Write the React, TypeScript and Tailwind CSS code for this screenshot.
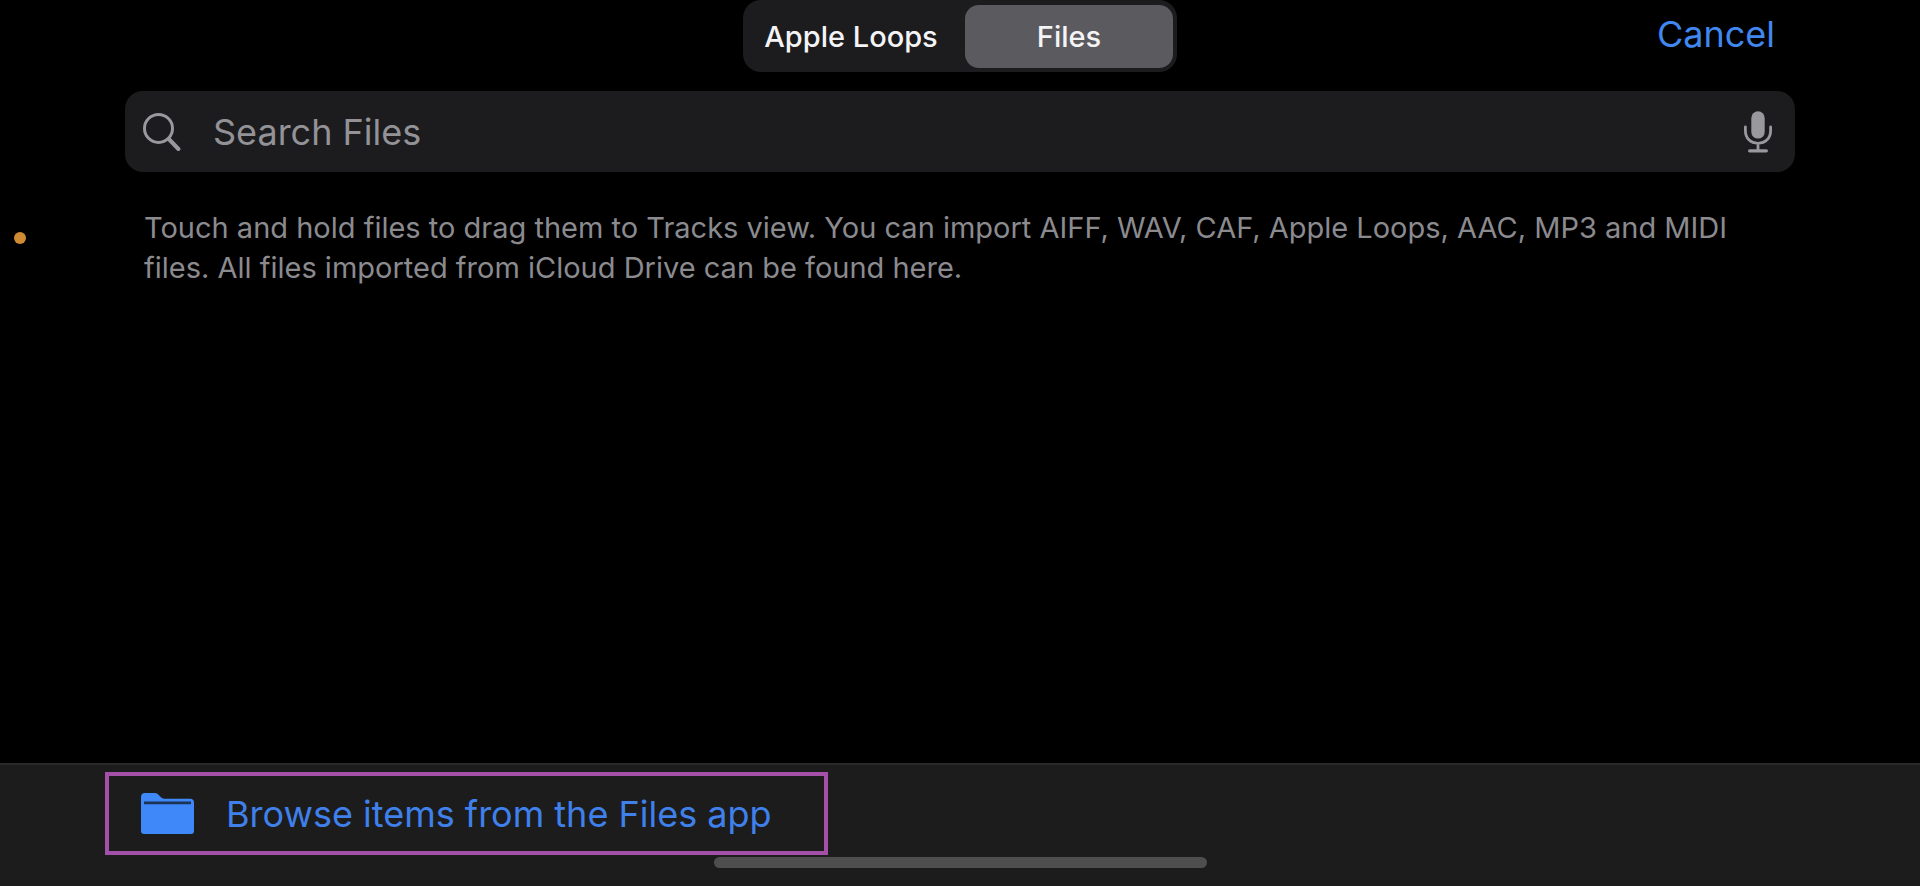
import React, { useState } from "react";

const tabs = ["Apple Loops", "Files"] as const;
type Tab = (typeof tabs)[number];

function SearchIcon() {
  return (
    <svg width="38" height="39" viewBox="0 0 38 39" fill="none" stroke="#98989d" strokeLinecap="round" aria-hidden="true">
      <circle cx="15.5" cy="16.4" r="14" strokeWidth="3" />
      <path d="M25.8 27L35.4 37" strokeWidth="4" />
    </svg>
  );
}

function MicIcon() {
  return (
    <svg width="28" height="43" viewBox="0 0 28 43" fill="none" aria-hidden="true">
      <rect x="7.3" y="1.2" width="13.4" height="27.4" rx="6.7" fill="#98989d" />
      <path
        d="M1.4 17V20.8C1.4 28.3 6.6 33.3 14 33.3S26.6 28.3 26.6 20.8V17M14 33.3V40"
        stroke="#98989d"
        strokeWidth="2.8"
        strokeLinecap="round"
      />
      <path d="M5.6 40.8H22.4" stroke="#98989d" strokeWidth="3.2" strokeLinecap="round" />
    </svg>
  );
}

function FolderIcon() {
  return (
    <svg width="53" height="41" viewBox="0 0 53 41" aria-hidden="true">
      <path
        d="M0 4Q0 0 4 0H13.5Q15.8 0 17.2 1.4L20.2 4.4Q21.7 5.8 24 5.8H49Q53 5.8 53 9.8V38Q53 41 50 41H3Q0 41 0 38Z"
        fill="#3f88f9"
      />
      <path d="M3 9.9H50" stroke="#1d3354" strokeWidth="2.6" />
    </svg>
  );
}

export default function App() {
  const [active, setActive] = useState<Tab>("Files");

  return (
    <div className="flex min-h-screen flex-col bg-black font-[Inter,'Noto_Sans',sans-serif]">
      <header className="grid grid-cols-[1fr_auto_1fr] items-start px-[125px]">
        <div className="col-start-2 flex h-[72px] gap-[10px] rounded-[18px] bg-[#1c1c1e] px-1 pt-[5px] pb-1">
          {tabs.map((tab) => (
            <button
              key={tab}
              type="button"
              aria-pressed={tab === active}
              onClick={() => setActive(tab)}
              className={
                tab === active
                  ? "w-[208px] rounded-[14px] bg-[#5b5a5f] text-[29px] font-medium text-[#f4f4f6]"
                  : "w-[208px] rounded-[14px] text-[29px] font-medium text-[#f4f4f6]"
              }
            >
              {tab}
            </button>
          ))}
        </div>
        <button type="button" className="mr-5 justify-self-end pt-2 text-[36px] leading-[52px] text-[#4088f0]">
          Cancel
        </button>
      </header>

      <div className="mt-[19px] px-[125px]">
        <label className="flex h-[81px] items-center rounded-[18px] bg-[#1c1c1e] pr-[23px] pl-[18px]">
          <SearchIcon />
          <input
            type="text"
            aria-label="Search Files"
            placeholder="Search Files"
            className="ml-8 min-w-0 flex-1 bg-transparent text-[36px] text-white outline-none placeholder:text-[#929297]"
          />
          <button type="button" aria-label="Dictate">
            <MicIcon />
          </button>
        </label>
      </div>

      <main className="mt-9 flex flex-1">
        <div className="w-36 shrink-0 pt-6 pl-[14px]">
          <div className="size-3 rounded-full bg-[#cf8b33]" />
        </div>
        <p className="mr-36 text-[29px] leading-10 text-[#8b8b8f]">
          Touch and hold files to drag them to Tracks view. You can import AIFF, WAV, CAF, Apple Loops, AAC, MP3 and
          MIDI files. All files imported from iCloud Drive can be found here.
        </p>
      </main>

      <footer className="flex flex-col border-t-2 border-[#29292a] bg-[#1c1c1c] pt-[7px] pb-[18px]">
        <button
          type="button"
          className="ml-[105px] flex h-[83px] items-center self-start border-4 border-[#a44fa8] pr-[52px] pl-8 text-[36px] text-[#3f80ea]"
        >
          <FolderIcon />
          <span className="ml-8">Browse items from the Files app</span>
        </button>
        <div className="mt-[2px] h-[11px] w-[493px] self-center rounded-full bg-[#4e4e4e]" />
      </footer>
    </div>
  );
}
